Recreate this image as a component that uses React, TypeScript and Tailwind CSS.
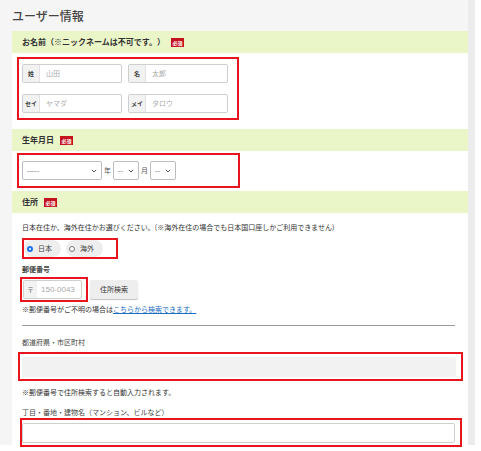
import React from 'react';

const jp = { fontFamily: '"Noto Sans CJK JP", "Noto Sans", sans-serif' };

const Badge: React.FC = () => (
  <span className="ml-[6px] inline-flex h-[9px] w-[13px] items-center justify-center bg-[#c4121f] text-[5px] font-bold leading-none text-white">
    必須
  </span>
);

const SectionHeader: React.FC<{ title: string; className?: string }> = ({ title, className }) => (
  <div className={`flex h-[22px] items-center bg-[#eaf5c8] px-[10px] ${className ?? ''}`}>
    <span className="text-[8px] font-bold leading-none text-[#333]">{title}</span>
    <Badge />
  </div>
);

const NameInput: React.FC<{ label: string; placeholder: string }> = ({ label, placeholder }) => (
  <div className="flex h-[19px] w-[100px] items-center overflow-hidden rounded-[2px] border border-[#cfcfcf] bg-white">
    <div className="flex h-full w-[17px] items-center justify-center border-r border-[#e2e2e2] bg-[#f2f2f2] text-[6px] font-bold text-[#444]">
      {label}
    </div>
    <span className="ml-[6px] text-[7px] text-[#aaa]">{placeholder}</span>
  </div>
);

const Chevron: React.FC = () => (
  <svg width="6" height="4" viewBox="0 0 6 4" className="shrink-0">
    <path d="M0.8 0.8 L3 3 L5.2 0.8" fill="none" stroke="#555" strokeWidth="1" />
  </svg>
);

const SelectBox: React.FC<{ width: string; text: string }> = ({ width, text }) => (
  <div className={`flex h-[19px] ${width} items-center justify-between rounded-[2px] border border-[#bdbdbd] bg-white pl-[4px] pr-[4px]`}>
    <span className="text-[7px] leading-none text-[#666]">{text}</span>
    <Chevron />
  </div>
);

const Radio: React.FC<{ label: string; checked?: boolean }> = ({ label, checked }) => (
  <div className="flex h-[17px] items-center gap-[5px] rounded-full bg-[#eeeeee] pl-[3px] pr-[9px]">
    {checked ? (
      <span className="flex h-[6px] w-[6px] items-center justify-center rounded-full bg-[#1a73e8]">
        <span className="h-[2px] w-[2px] rounded-full bg-white" />
      </span>
    ) : (
      <span className="h-[6px] w-[6px] rounded-full border border-[#777] bg-white" />
    )}
    <span className="text-[7px] leading-none text-[#444]">{label}</span>
  </div>
);

const App: React.FC = () => {
  return (
    <div className="h-[451px] w-[481px] bg-white" style={jp}>
      <div className="h-[445px] w-[475px] border-r-[7px] border-[#ececec] bg-[#f5f5f5] pl-[12px]">
        <div className="flex h-[31px] items-center">
          <h1 className="text-[12px] font-medium leading-none text-[#444]">ユーザー情報</h1>
        </div>

        <div className="h-[414px] w-[456px] bg-white">
          <SectionHeader title="お名前（※ニックネームは不可です。）" />
          <div className="ml-[5px] mt-[4px] h-[63px] w-[222px] border-2 border-[#e8141e] pl-[3px] pt-[5px]">
            <div className="grid w-fit grid-cols-2 gap-x-[6px] gap-y-[11px]">
              <NameInput label="姓" placeholder="山田" />
              <NameInput label="名" placeholder="太郎" />
              <NameInput label="セイ" placeholder="ヤマダ" />
              <NameInput label="メイ" placeholder="タロウ" />
            </div>
          </div>

          <SectionHeader title="生年月日" className="mt-[9px]" />
          <div className="ml-[5px] mt-[2px] flex h-[35px] w-[223px] items-center border-2 border-[#e8141e] pl-[3px]">
            <SelectBox width="w-[80px]" text="-----" />
            <span className="mx-[2px] text-[7px] text-[#555]">年</span>
            <SelectBox width="w-[26px]" text="--" />
            <span className="mx-[2px] text-[7px] text-[#555]">月</span>
            <SelectBox width="w-[26px]" text="--" />
          </div>

          <SectionHeader title="住所" className="mt-[3px]" />
          <div className="flex flex-col px-[10px]">
            <p className="mt-[9px] text-[7px] leading-[10px] text-[#333]">
              日本在住か、海外在住かお選びください。(※海外在住の場合でも日本国口座しかご利用できません)
            </p>
            <div className="mt-[6px] flex h-[21px] w-[96px] items-center gap-[5px] border-2 border-[#e8141e]">
              <Radio label="日本" checked />
              <Radio label="海外" />
            </div>

            <p className="mt-[5px] text-[7px] font-bold leading-[10px] text-[#444]">郵便番号</p>
            <div className="mt-[3px] flex items-center">
              <div className="-ml-[2px] h-[25px] w-[68px] border-2 border-[#e8141e] pl-[1px] pt-[1px]">
                <div className="flex h-[19px] w-[59px] items-center rounded-[2px] border border-[#cfcfcf] bg-white">
                  <div className="flex h-full w-[13px] items-center justify-center bg-[#f2f2f2] text-[6px] font-bold text-[#666]">
                    〒
                  </div>
                  <span className="ml-[4px] text-[8px] text-[#aaa]" style={{ fontFamily: '"Liberation Sans", sans-serif' }}>
                    150-0043
                  </span>
                </div>
              </div>
              <button className="ml-[2px] flex h-[19px] w-[48px] items-center justify-center rounded-[2px] bg-[#eeeeee] text-[7px] text-[#333] shadow-[0_1px_1px_rgba(0,0,0,0.25)]">
                住所検索
              </button>
            </div>
            <p className="mt-[2px] text-[7px] leading-[10px] text-[#333]">
              ※郵便番号がご不明の場合は
              <span className="text-[#1a6fc4] underline">こちらから検索できます。</span>
            </p>

            <div className="mt-[11px] h-px w-[433px] bg-[#9a9a9a]" />

            <p className="mt-[11px] text-[7px] leading-[10px] text-[#444]">都道府県・市区町村</p>
            <div className="-ml-[4px] mt-[5px] h-[29px] w-[445px] border-2 border-[#e8141e] pl-[2px] pt-[3px]">
              <div className="h-[20px] w-[434px] rounded-[2px] bg-[#f2f2f2]" />
            </div>
            <p className="mt-[6px] text-[7px] leading-[10px] text-[#333]">※郵便番号で住所検索すると自動入力されます。</p>

            <p className="mt-[10px] text-[7px] leading-[10px] text-[#444]">丁目・番地・建物名（マンション、ビルなど）</p>
            <div className="-ml-[2px] mt-[1px] h-[29px] w-[442px] border-2 border-[#e8141e] pt-[3px]">
              <div className="h-[20px] w-[433px] rounded-[2px] border border-[#cfcfcf] bg-white" />
            </div>
          </div>
        </div>
      </div>
    </div>
  );
};

export default App;
